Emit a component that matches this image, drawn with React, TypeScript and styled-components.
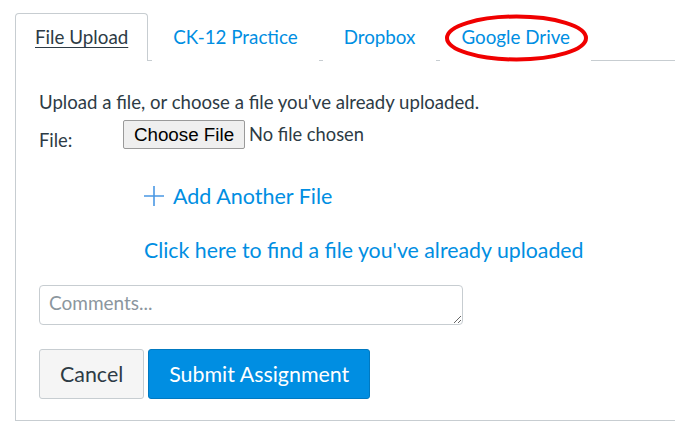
import styled, { createGlobalStyle } from "styled-components"

const GlobalStyle = createGlobalStyle`
  body {
    margin: 0;
    background: #fff;
    font-family: Lato, "Open Sans", sans-serif;
    color: #2d3b45;
  }
`

const tabs = ["File Upload", "CK-12 Practice", "Dropbox", "Google Drive"]

export default function App(): JSX.Element {
  return (
    <Page>
      <GlobalStyle />
      <TabList>
        {tabs.map((t, i) => (
          <Tab key={t} $active={i === 0}>
            {t}
            {t === "Google Drive" && (
              <Circle viewBox="0 0 145 48" width="145" height="48">
                <ellipse cx="72.5" cy="24" rx="69.5" ry="21.5" fill="none" stroke="#f00000" strokeWidth="4" />
              </Circle>
            )}
          </Tab>
        ))}
      </TabList>
      <Panel>
        <Intro>Upload a file, or choose a file you've already uploaded.</Intro>
        <FileRow>
          <Label>File:</Label>
          <ChooseButton>Choose File</ChooseButton>
          <NoFile>No file chosen</NoFile>
        </FileRow>
        <AddLink>
          <svg width="22" height="22" viewBox="0 0 22 22">
            <path d="M11 1v20M1 11h20" stroke="#4a98e4" strokeWidth="1.6" />
          </svg>
          Add Another File
        </AddLink>
        <FindLink>Click here to find a file you've already uploaded</FindLink>
        <Comments placeholder="Comments..." />
        <Actions>
          <Button>Cancel</Button>
          <Button $primary>Submit Assignment</Button>
        </Actions>
      </Panel>
    </Page>
  )
}

const Page = styled.div`
  padding: 13px 0 0 15px;
`

const TabList = styled.div`
  display: flex;
  gap: 4px;
  border-bottom: 1px solid #c7cdd1;
`

const Tab = styled.div<{ $active?: boolean }>`
  position: relative;
  padding: 12px ${(p) => (p.$active ? "19px" : "20px")};
  line-height: 22px;
  font-size: 18.8px;
  border: 1px solid ${(p) => (p.$active ? "#c7cdd1" : "transparent")};
  border-bottom: none;
  border-radius: 4px 4px 0 0;
  margin-bottom: -1px;
  background: #fff;
  color: ${(p) => (p.$active ? "#2d3b45" : "#008ee2")};
  text-decoration: ${(p) => (p.$active ? "underline" : "none")};
  text-underline-offset: 3px;
  ${(p) => (p.$active ? "padding-bottom: 13px;" : "")}
`

const Circle = styled.svg`
  position: absolute;
  left: 3px;
  top: 0px;
`

const Panel = styled.div`
  border-left: 1px solid #c7cdd1;
  border-bottom: 1px solid #c7cdd1;
  padding: 29px 0 21px 23px;
`

const Intro = styled.div`
  font-size: 18.6px;
  line-height: 24px;
`

const FileRow = styled.div`
  display: flex;
  align-items: flex-start;
  margin-top: 6px;
`

const Label = styled.div`
  width: 84px;
  font-size: 18.4px;
  line-height: 24px;
  margin-top: 8px;
`

const ChooseButton = styled.button`
  font-family: "Liberation Sans", Arial, sans-serif;
  font-size: 18.8px;
  height: 29px;
  width: 122px;
  padding: 0;
  background: #efefef;
  border: 1px solid #9a9a9a;
  border-radius: 2px;
  color: #000;
`

const NoFile = styled.div`
  font-size: 18.3px;
  line-height: 29px;
  margin-left: 4px;
`

const AddLink = styled.div`
  display: flex;
  align-items: center;
  gap: 8px;
  margin: 30px 0 0 104px;
  font-size: 21.5px;
  line-height: 28px;
  color: #008ee2;
`

const FindLink = styled.div`
  margin: 26px 0 0 105px;
  font-size: 21.3px;
  line-height: 28px;
  color: #008ee2;
`

const Comments = styled.textarea`
  display: block;
  box-sizing: border-box;
  margin-top: 21px;
  width: 424px;
  height: 40px;
  padding: 6px 9px;
  border: 1px solid #c7cdd1;
  border-radius: 4px;
  font-family: Lato, sans-serif;
  font-size: 19px;
  line-height: 22px;
  color: #2d3b45;
  &::placeholder {
    color: #8b969e;
  }
`

const Actions = styled.div`
  display: flex;
  gap: 4px;
  margin-top: 24px;
`

const Button = styled.button<{ $primary?: boolean }>`
  height: 50px;
  padding: 0 20px;
  font-family: Lato, sans-serif;
  font-size: 21.4px;
  border-radius: 3px;
  border: 1px solid ${(p) => (p.$primary ? "#0079c1" : "#c7cdd1")};
  background: ${(p) => (p.$primary ? "#008ee2" : "#f5f5f5")};
  color: ${(p) => (p.$primary ? "#fff" : "#2d3b45")};
`
